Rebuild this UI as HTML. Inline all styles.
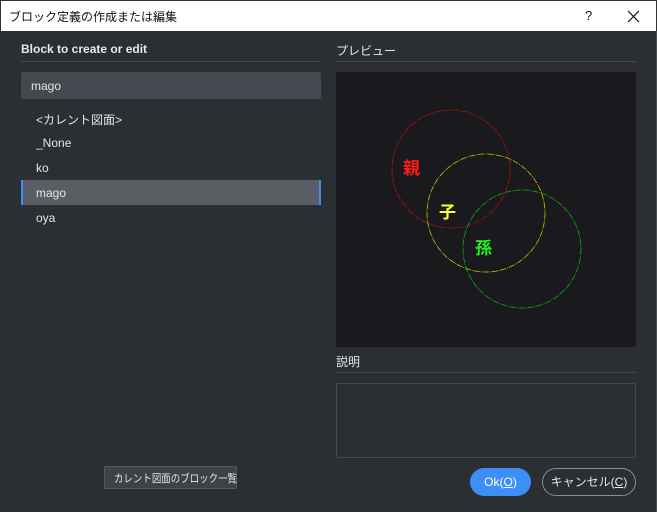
<!DOCTYPE html>
<html><head><meta charset="utf-8"><style>
*{margin:0;padding:0;box-sizing:border-box}
body{width:657px;height:512px;background:#2b2e33;position:relative;overflow:hidden;font-family:"Liberation Sans","Noto Sans CJK JP",sans-serif;color:#e6e6e6;font-size:12px}
.a{position:absolute;white-space:nowrap}
.title{left:0;top:0;width:657px;height:31px;background:#fff;color:#111;border:1px solid #333;border-bottom:none}
.line{height:1px;background:#44474d}
</style></head><body>
<div class="a title">
<div class="a" style="left:8px;top:7px;font-size:12px">ブロック定義の作成または編集</div>
<div class="a" style="left:584px;top:7px;font-size:13px">?</div>
<svg class="a" style="left:626px;top:9px" width="13" height="13"><path d="M1 1L12 12M12 1L1 12" stroke="#111" stroke-width="1.2"/></svg>
</div>
<div class="a" style="left:21px;top:42px;font-size:12px;font-weight:600;color:#e8e8e8">Block to create or edit</div>
<div class="a line" style="left:21px;top:61px;width:300px"></div>
<div class="a" style="left:21px;top:72px;width:300px;height:27px;background:#45484e;border-radius:2px"></div>
<div class="a" style="left:31px;top:79px">mago</div>
<div class="a" style="left:36px;top:111px">&lt;カレント図面&gt;</div>
<div class="a" style="left:36px;top:136px">_None</div>
<div class="a" style="left:36px;top:161px">ko</div>
<div class="a" style="left:21px;top:180px;width:300px;height:25px;background:#5a5d63;border-left:2px solid #3d8ef5;border-right:2px solid #3d8ef5"></div>
<div class="a" style="left:36px;top:186px">mago</div>
<div class="a" style="left:36px;top:211px">oya</div>

<div class="a" style="left:336px;top:42px;font-size:12px">プレビュー</div>
<div class="a line" style="left:336px;top:61px;width:300px"></div>
<svg class="a" style="left:336px;top:72px" width="300" height="275">
<rect width="300" height="275" fill="#1a1a1e"/>
<g fill="none" stroke-width="0.8" stroke-dasharray="6 1 1 1">
<circle cx="115" cy="97" r="59" stroke="#b01010"/>
<circle cx="150" cy="141" r="59" stroke="#c8c800"/>
<circle cx="186" cy="177" r="59" stroke="#10b010"/>
</g>
<g font-family="Noto Sans CJK JP,sans-serif" font-size="17" font-weight="bold">
<text x="67" y="102" fill="#ff1a1a">親</text>
<text x="103" y="146" fill="#ffff30">子</text>
<text x="139" y="182" fill="#20ee20">孫</text>
</g>
</svg>
<div class="a" style="left:336px;top:353px;font-size:12px">説明</div>
<div class="a line" style="left:336px;top:372px;width:300px"></div>
<div class="a" style="left:336px;top:383px;width:300px;height:75px;border:1px solid #45484e;border-radius:2px"></div>
<div class="a" style="left:104px;top:466px;width:133px;height:23px;background:#3e4147;border:1px solid #55585e;border-radius:2px;overflow:hidden"></div>
<div class="a" style="left:104px;top:468px;width:133px;height:23px;line-height:23px;text-align:center;font-size:11px"><span style="display:inline-block;transform:scaleX(0.86)">カレント図面のブロック一覧</span></div>
<div class="a" style="left:470px;top:468px;width:61px;height:28px;background:#3d8ef5;border-radius:14px;text-align:center;line-height:28px;color:#fff">Ok(<u>O</u>)</div>
<div class="a" style="left:542px;top:468px;width:94px;height:28px;border:1px solid #8a8d92;border-radius:14px;text-align:center;line-height:26px">キャンセル(<u>C</u>)</div>
<div class="a" style="left:656px;top:31px;width:1px;height:481px;background:#4a4d52"></div>
</body></html>
